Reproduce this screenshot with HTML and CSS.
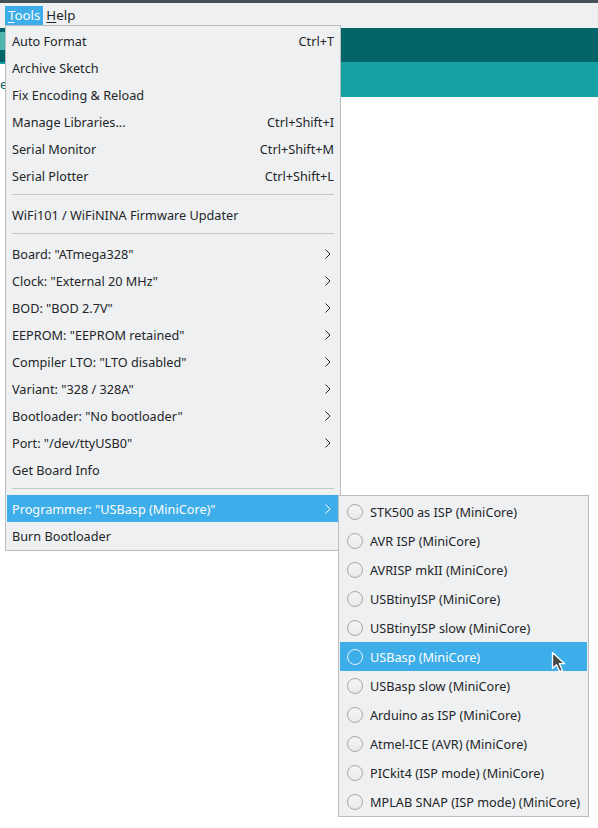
FILE: index.html
```html
<!DOCTYPE html>
<html>
<head>
<meta charset="utf-8">
<link rel="stylesheet" href="styles.css">
</head>
<body>
<div class="app">
  <div class="topbar"></div>
  <div class="menubar">
    <span class="mb-item active"><u>T</u>ools</span>
    <span class="mb-item"><u>H</u>elp</span>
  </div>
  <div class="toolbar"><div class="tb-btn"></div></div>
  <div class="tabs"><div class="tab">e</div></div>
  <div class="editor"></div>

  <div class="menu">
    <div class="mi"><span>Auto Format</span><span>Ctrl+T</span></div>
    <div class="mi"><span>Archive Sketch</span></div>
    <div class="mi"><span>Fix Encoding &amp; Reload</span></div>
    <div class="mi"><span>Manage Libraries...</span><span>Ctrl+Shift+I</span></div>
    <div class="mi"><span>Serial Monitor</span><span>Ctrl+Shift+M</span></div>
    <div class="mi"><span>Serial Plotter</span><span>Ctrl+Shift+L</span></div>
    <div class="sep"></div>
    <div class="mi"><span>WiFi101 / WiFiNINA Firmware Updater</span></div>
    <div class="sep"></div>
    <div class="mi sub"><span>Board: "ATmega328"</span><svg class="chev" width="6" height="10" viewBox="0 0 6 10"><polyline points="0.5,0.5 5,5 0.5,9.5"/></svg></div>
    <div class="mi sub"><span>Clock: "External 20 MHz"</span><svg class="chev" width="6" height="10" viewBox="0 0 6 10"><polyline points="0.5,0.5 5,5 0.5,9.5"/></svg></div>
    <div class="mi sub"><span>BOD: "BOD 2.7V"</span><svg class="chev" width="6" height="10" viewBox="0 0 6 10"><polyline points="0.5,0.5 5,5 0.5,9.5"/></svg></div>
    <div class="mi sub"><span>EEPROM: "EEPROM retained"</span><svg class="chev" width="6" height="10" viewBox="0 0 6 10"><polyline points="0.5,0.5 5,5 0.5,9.5"/></svg></div>
    <div class="mi sub"><span>Compiler LTO: "LTO disabled"</span><svg class="chev" width="6" height="10" viewBox="0 0 6 10"><polyline points="0.5,0.5 5,5 0.5,9.5"/></svg></div>
    <div class="mi sub"><span>Variant: "328 / 328A"</span><svg class="chev" width="6" height="10" viewBox="0 0 6 10"><polyline points="0.5,0.5 5,5 0.5,9.5"/></svg></div>
    <div class="mi sub"><span>Bootloader: "No bootloader"</span><svg class="chev" width="6" height="10" viewBox="0 0 6 10"><polyline points="0.5,0.5 5,5 0.5,9.5"/></svg></div>
    <div class="mi sub"><span>Port: "/dev/ttyUSB0"</span><svg class="chev" width="6" height="10" viewBox="0 0 6 10"><polyline points="0.5,0.5 5,5 0.5,9.5"/></svg></div>
    <div class="mi"><span>Get Board Info</span></div>
    <div class="sep"></div>
    <div class="mi sub hl"><span>Programmer: "USBasp (MiniCore)"</span><svg class="chev" width="6" height="10" viewBox="0 0 6 10"><polyline points="0.5,0.5 5,5 0.5,9.5"/></svg></div>
    <div class="mi"><span>Burn Bootloader</span></div>
  </div>

  <div class="submenu">
    <div class="ri"><span class="radio"></span><span>STK500 as ISP (MiniCore)</span></div>
    <div class="ri"><span class="radio"></span><span>AVR ISP (MiniCore)</span></div>
    <div class="ri"><span class="radio"></span><span>AVRISP mkII (MiniCore)</span></div>
    <div class="ri"><span class="radio"></span><span>USBtinyISP (MiniCore)</span></div>
    <div class="ri"><span class="radio"></span><span>USBtinyISP slow (MiniCore)</span></div>
    <div class="ri hl"><span class="radio"></span><span>USBasp (MiniCore)</span></div>
    <div class="ri"><span class="radio"></span><span>USBasp slow (MiniCore)</span></div>
    <div class="ri"><span class="radio"></span><span>Arduino as ISP (MiniCore)</span></div>
    <div class="ri"><span class="radio"></span><span>Atmel-ICE (AVR) (MiniCore)</span></div>
    <div class="ri"><span class="radio"></span><span>PICkit4 (ISP mode) (MiniCore)</span></div>
    <div class="ri"><span class="radio"></span><span>MPLAB SNAP (ISP mode) (MiniCore)</span></div>
  </div>

  <svg class="cursor" width="16" height="24" viewBox="0 0 16 24">
    <path d="M1.5 1.5 L1.5 17.5 L5.5 13.8 L8.6 20.6 L11.4 19.3 L8.4 12.7 L13.6 12.7 Z" fill="#4a4a4a" stroke="#ffffff" stroke-width="1.3" stroke-linejoin="round"/>
  </svg>
</div>
</body>
</html>
```

FILE: styles.css
```css
* { box-sizing: border-box; }
html, body { margin: 0; padding: 0; }
body {
  width: 598px;
  height: 828px;
  overflow: hidden;
  background: #ffffff;
  font-family: "Noto Sans", "DejaVu Sans", sans-serif;
  font-size: 12.7px;
  color: #232629;
}
.app {
  position: relative;
  width: 598px;
  height: 828px;
  display: flex;
  flex-direction: column;
}
.topbar { height: 3px; background: #475057; }
.menubar {
  height: 25px;
  background: #eff0f1;
  display: flex;
  align-items: flex-start;
  padding: 3px 0 0 5px;
  font-size: 13.3px;
}
.mb-item {
  height: 19px;
  line-height: 19px;
  padding: 0 3px;
}
.mb-item.active { background: #3daee9; color: #fcfcfc; }
.mb-item u { text-underline-offset: 2px; }
.toolbar {
  height: 34px;
  background: #006468;
  padding-top: 4px;
}
.tb-btn { width: 5px; height: 18px; background: #4fb3b0; }
.tabs {
  height: 35px;
  background: #17a1a5;
  padding-top: 2px;
}
.tab {
  width: 60px;
  height: 33px;
  background: #ffffff;
  color: #006468;
  line-height: 40px;
  padding-left: 0;
}
.editor { flex: 1; background: #ffffff; }

.menu {
  position: absolute;
  left: 5px;
  top: 25px;
  width: 336px;
  background: #eff0f1;
  border: 1px solid #b9bbbd;
  padding: 1px 1px;
  display: flex;
  flex-direction: column;
}
.mi {
  height: 27px;
  display: flex;
  align-items: center;
  justify-content: space-between;
  padding: 0 5px 0 5px;
  white-space: nowrap;
}
.mi.sub { padding-right: 8px; }
.mi.hl { background: #3daee9; color: #fcfcfc; }
.chev { display: block; }
.chev polyline { fill: none; stroke: #232629; stroke-width: 1; }
.mi.hl .chev polyline { stroke: #fcfcfc; }
.sep {
  height: 12px;
  padding: 5px 5px 6px 5px;
}
.sep::before {
  content: "";
  display: block;
  height: 1px;
  background: #c5c7c9;
}

.submenu {
  position: absolute;
  left: 338px;
  top: 495px;
  width: 251px;
  background: #eff0f1;
  border: 1px solid #b9bbbd;
  padding: 1px 1px 0 1px;
  display: flex;
  flex-direction: column;
}
.ri {
  height: 29px;
  display: flex;
  align-items: center;
  padding-left: 7px;
  gap: 7px;
  white-space: nowrap;
}
.ri.hl { background: #3daee9; color: #fcfcfc; }
.radio {
  width: 16px;
  height: 16px;
  border-radius: 50%;
  border: 1px solid #a6a8ab;
  background: linear-gradient(#f4f5f5, #e9eaeb);
  flex: none;
}
.ri.hl .radio {
  border: 1.5px solid #e8f4fb;
  background: #3daee9;
}
.cursor {
  position: absolute;
  left: 551px;
  top: 651px;
}
```
